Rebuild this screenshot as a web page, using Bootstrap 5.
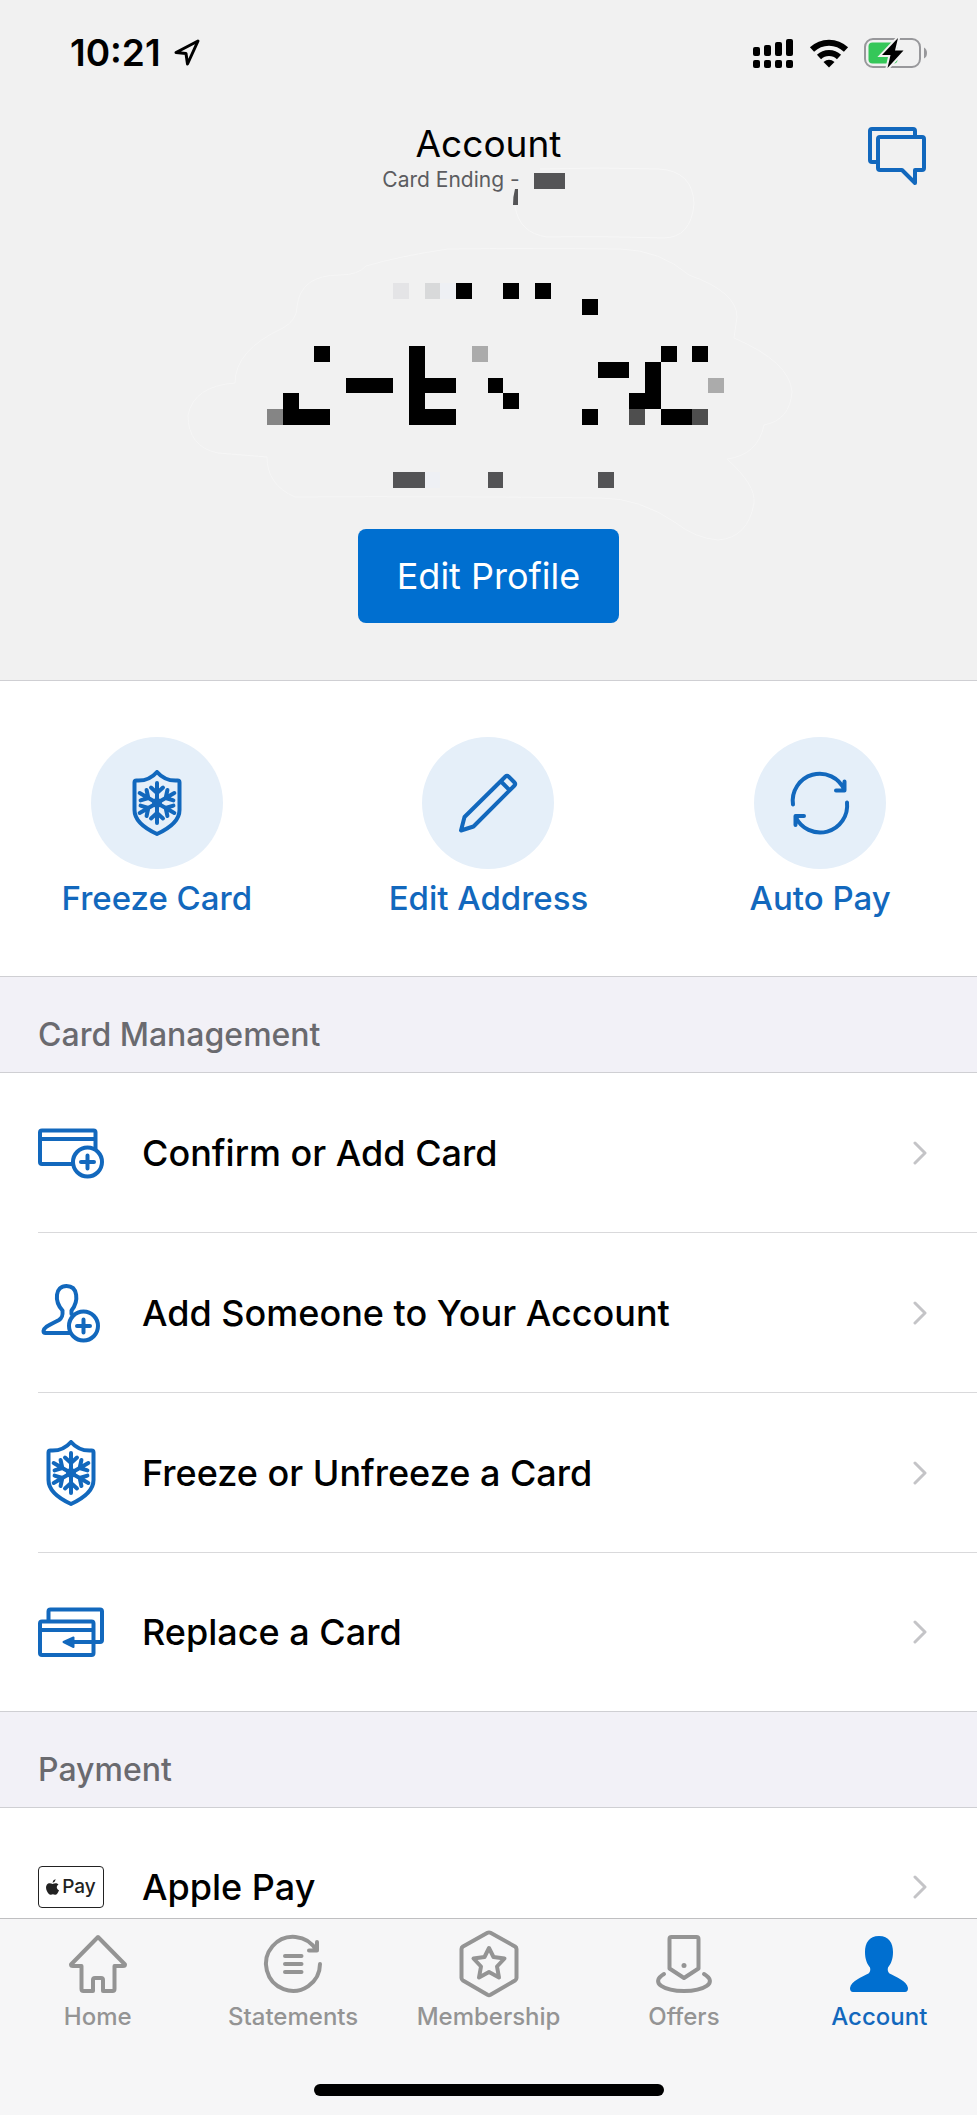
<!DOCTYPE html>
<html lang="en">
<head>
<meta charset="utf-8">
<meta name="viewport" content="width=device-width, initial-scale=1">
<title>Account</title>
<link rel="stylesheet" href="https://cdn.jsdelivr.net/npm/bootstrap@5.3.0/dist/css/bootstrap.min.css">
<style>
  :root { --blue: #1268bd; --blue-fill: #006fd0; --line: #cfcfd3; }
  body { font-family: Inter, "Liberation Sans", sans-serif; color: #000; background: #fff; }
  svg { display: block; flex: none; overflow: visible; }
  .ico { fill: none; stroke: currentColor; stroke-width: 4; stroke-linecap: round; stroke-linejoin: round; }

  .profile { background: #f1f1f1; border-bottom: 1px solid var(--line); padding-bottom: 57px; }
  .status { height: 106px; margin-bottom: 16px; padding: 0 50px 0 70px; }
  .clock { font-size: 37px; line-height: 44px; font-weight: 600; }
  .titlebar { display: grid; grid-template-columns: 1fr auto 1fr; padding: 0 51px; }
  .title { font-size: 37px; line-height: 44px; font-weight: 400; }
  .subtitle { font-size: 21px; line-height: 28px; color: #5b5c60; }
  .chat { color: var(--blue); margin-top: 5px; }
  .btn-profile { background: var(--blue-fill); color: #fff; font-size: 36px; line-height: 44px; padding: 25px 39px; border: 0; border-radius: 8px; }
  .btn-profile:hover { background: #0062b8; color: #fff; }

  .quick { padding: 56px 0 58px; border-bottom: 1px solid var(--line); }
  .quick .row { --bs-gutter-x: 18px; }
  .quick a { color: var(--blue); font-size: 33px; line-height: 40px; font-weight: 500; gap: 9px; }
  .disc { width: 132px; height: 132px; background: #e5eff9; }

  .section-title { font-size: 32px; line-height: 40px; font-weight: 500; color: #6a6a6f; background: #f2f1f7; padding: 38px 38px 17px; border-bottom: 1px solid var(--line); }
  .menu a { color: #000; margin-left: 38px; padding-right: 50px; height: 160px; border-bottom: 1px solid #d9d9db; gap: 38px; font-size: 36px; line-height: 44px; font-weight: 500; }
  .menu li:last-child { border-bottom: 1px solid var(--line); }
  .menu li:last-child a { height: 158px; border-bottom: 0; }
  .menu .ico { color: var(--blue); }
  .menu .chev { color: #c4c4c7; stroke-width: 3; }
  .pay-mark { width: 66px; height: 42px; border: 1px solid #222; border-radius: 4px; font-size: 19px; line-height: 24px; font-weight: 500; gap: 3px; color: #222; }

  .tabs { background: #f6f6f7; border-top: 1px solid #bfbfc1; padding: 11px 0 19px; }
  .tabs a { color: #949494; font-size: 24px; line-height: 28px; font-weight: 500; gap: 5px; flex: 1 1 0; }
  .tabs a.active { color: var(--blue); }
  .home-bar { width: 350px; height: 12px; background: #000; margin-top: 53px; }
</style>
</head>
<body>

<svg width="0" height="0" class="position-absolute" aria-hidden="true">
  <symbol id="shield" viewBox="0 0 66 66">
    <path d="M33 2C27 9 20 11 12.500 10.500Q10.500 10.500 10.500 12.500V40C10.500 51 20 58 33 64C46 58 55.500 51 55.500 40V12.500Q55.500 10.500 53.500 10.500C46 11 39 9 33 2Z"/>
    <path d="M33 33V13M27 17.500L33 23L39 17.500"/>
    <path d="M33 33V13M27 17.500L33 23L39 17.500" transform="rotate(60 33 33)"/>
    <path d="M33 33V13M27 17.500L33 23L39 17.500" transform="rotate(120 33 33)"/>
    <path d="M33 33V13M27 17.500L33 23L39 17.500" transform="rotate(180 33 33)"/>
    <path d="M33 33V13M27 17.500L33 23L39 17.500" transform="rotate(240 33 33)"/>
    <path d="M33 33V13M27 17.500L33 23L39 17.500" transform="rotate(300 33 33)"/>
    <circle cx="33" cy="33" r="3"/>
  </symbol>
  <symbol id="chevron" viewBox="0 0 14 24"><path d="M2 2L12 12L2 22"/></symbol>
</svg>

<header class="profile">
  <div class="status d-flex align-items-center justify-content-between">
    <div class="d-flex align-items-center gap-2">
      <span class="clock">10:21</span>
      <svg class="ms-1" width="28" height="28" viewBox="0 0 28 28" fill="none" stroke="#000" stroke-width="3" stroke-linejoin="round"><path d="M25 2L3 13.500L13 14.500L14.500 25Z"/></svg>
    </div>
    <div class="d-flex align-items-center">
      <svg class="me-3" width="41" height="30" viewBox="0 0 41 30"><g fill="#000"><rect y="9" width="7" height="9" rx="2"/><rect x="11" y="7" width="7" height="11" rx="2"/><rect x="22" y="4" width="7" height="14" rx="2"/><rect x="33" y="1" width="7" height="17" rx="2"/><rect y="22" width="7" height="8" rx="2"/><rect x="11" y="22" width="7" height="8" rx="2"/><rect x="22" y="22" width="7" height="8" rx="2"/><rect x="33" y="22" width="7" height="8" rx="2"/></g></svg>
      <svg class="me-3" width="38" height="29" viewBox="0 0 38 29"><g fill="none" stroke="#000" stroke-width="6"><path d="M2 10.500A24.500 24.500 0 0 1 36 10.500"/><path d="M9 18A14.500 14.500 0 0 1 29 18"/></g><path d="M19 28.500L13.500 23Q19 18.500 24.500 23Z"/></svg>
      <svg width="63" height="30" viewBox="0 0 63 30"><rect x="1" y="1" width="55" height="28" rx="8" fill="none" stroke="#98989b" stroke-width="2"/><rect x="4.500" y="4.500" width="29" height="21" rx="4" fill="#35c759"/><path d="M60 9.500Q63 11 63 15T60 20.500Z" fill="#98989b"/><path d="M34 0L18 17H26.500L23.500 30L39.500 12.500H31Z" fill="#000" stroke="#f1f1f1" stroke-width="4" paint-order="stroke"/></svg>
    </div>
  </div>

  <div class="titlebar">
    <span></span>
    <div class="text-center">
      <h1 class="title m-0">Account</h1>
      <div class="subtitle d-flex justify-content-center">
        <span>Card Ending -</span>
        <svg width="75" height="28" viewBox="521 166 75 28"><path d="M535 173h31v16h-31z M516 189h3v16h-5q0-9 2-16z" fill="#545456"/><path d="M541 169Q600 167 660 169Q694 171 695 204Q692 238 664 238Q600 236 548 237Q520 233 516 206" fill="none" stroke="#f7f7f7"/></svg>
      </div>
    </div>
    <a href="#" class="chat ms-auto" aria-label="Messages"><svg class="ico" width="58" height="58" viewBox="0 0 58 58"><path d="M10 35H4Q2 35 2 33V4Q2 2 4 2H45Q47 2 47 4V10M12 10H54Q56 10 56 12V41Q56 43 54 43H47V56L34 43H12Q10 43 10 41V12Q10 10 12 10Z"/></svg></a>
  </div>

  <!-- redacted name and membership details -->
  <svg class="mx-auto mw-100" width="621" height="335" viewBox="178 194 621 335" role="img" aria-label="Hidden member details">
    <path d="M448 249Q530 248 620 249Q660 250 689 275Q737 292 737 317L734 338Q790 362 792 392Q790 420 764 425Q758 455 727 459Q756 485 754 503Q748 538 718 540Q695 538 676 523Q640 498 601 498Q440 496 295 497Q267 485 267 457L218 453Q188 447 188 415Q194 386 235 383Q235 350 283 328Q297 320 297 307Q300 275 340 275Q358 275 366 266Q400 256 448 249Z" fill="none" stroke="#f6f6f6"/>
    <g transform="translate(267 283) scale(15.750)" shape-rendering="crispEdges">
      <path d="M12 0h1v1h-1zM15 0h1v1h-1zM17 0h1v1h-1zM20 1h1v1h-1zM3 4h1v1h-1zM9 4h1v2h2v1h-2v1h2v1h-3zM25 4h1v1h-1zM27 4h1v1h-1zM21 5h2v1h-2zM24 5h1v3h-2v-1h1zM5 6h3v1h-3zM14 6h1v1h-1zM15 7h1v1h-1zM1 7h1v1h2v1h-3zM20 8h1v1h-1zM25 8h2v1h-2z"/>
      <path fill="#e4e4e6" d="M8 0h1v1h-1z"/><path fill="#d8d9da" d="M10 0h1v1h-1z"/>
      <path fill="#ababab" d="M13 4h1v1h-1zM28 6h1v1h-1z"/><path fill="#858585" d="M0 8h1v1h-1z"/>
      <path fill="#4e4e4e" d="M23 8h1v1h-1zM27 8h1v1h-1z"/><path fill="#545456" d="M8 12h2v1h-2zM14 12h1v1h-1zM21 12h1v1h-1z"/>
      <path fill="#eef0f4" d="M10 12h1v1h-1zM11 0h1v1h-1z"/>
    </g>
  </svg>
  <div class="text-center"><button type="button" class="btn btn-profile d-block mx-auto">Edit Profile</button></div>
</header>

<main>
  <nav class="quick overflow-hidden" aria-label="Quick actions">
    <div class="row">
      <div class="col-4"><a href="#" class="d-flex flex-column align-items-center text-decoration-none">
        <span class="disc rounded-circle d-flex align-items-center justify-content-center"><svg class="ico" width="66" height="66"><use href="#shield"/></svg></span>Freeze Card</a></div>
      <div class="col-4"><a href="#" class="d-flex flex-column align-items-center text-decoration-none">
        <span class="disc rounded-circle d-flex align-items-center justify-content-center"><svg class="ico" width="66" height="66" viewBox="0 0 66 66"><path d="M6 60.500L9.500 47L50.500 6.500Q52 5 53.500 6.500L59.500 12.500Q61 14 59.500 15.500L18.500 56.500ZM46 11.500L54.500 20"/></svg></span>Edit Address</a></div>
      <div class="col-4"><a href="#" class="d-flex flex-column align-items-center text-decoration-none">
        <span class="disc rounded-circle d-flex align-items-center justify-content-center"><svg class="ico" width="66" height="66" viewBox="0 0 66 66"><path d="M6 34.500A27 27 0 0 1 57.500 20M57.500 11.500V20.500H49M60 32.500A27 27 0 0 1 8.500 46.500M8.500 55V46H17"/></svg></span>Auto Pay</a></div>
    </div>
  </nav>

  <section>
    <h2 class="section-title m-0">Card Management</h2>
    <ul class="menu list-unstyled m-0">
      <li><a href="#" class="d-flex align-items-center text-decoration-none">
        <svg class="ico" width="66" height="66" viewBox="0 0 66 66"><rect x="2" y="10.500" width="55.500" height="33.500" rx="2"/><path d="M2 19H57"/><circle cx="49.500" cy="42" r="14.500" fill="#fff"/><path d="M49.500 35.500V48.500M43 42H56"/></svg>
        <span class="flex-grow-1">Confirm or Add Card</span><svg class="ico chev" width="14" height="24"><use href="#chevron"/></svg></a></li>
      <li><a href="#" class="d-flex align-items-center text-decoration-none">
        <svg class="ico" width="66" height="66" viewBox="0 0 66 66"><path d="M24.500 30.500C16 21 17 6 28.500 6S41 21 33.500 30.500M24.500 30.500C25 36 24 38 21 40C14 44 6 46 5.500 51Q5.500 53 7.500 53H32M33.500 30.500V34"/><circle cx="45.500" cy="46" r="14.500" fill="#fff"/><path d="M45.500 39.500V52.500M39 46H52"/></svg>
        <span class="flex-grow-1">Add Someone to Your Account</span><svg class="ico chev" width="14" height="24"><use href="#chevron"/></svg></a></li>
      <li><a href="#" class="d-flex align-items-center text-decoration-none">
        <svg class="ico" width="66" height="66"><use href="#shield"/></svg>
        <span class="flex-grow-1">Freeze or Unfreeze a Card</span><svg class="ico chev" width="14" height="24"><use href="#chevron"/></svg></a></li>
      <li><a href="#" class="d-flex align-items-center text-decoration-none">
        <svg class="ico" width="66" height="66" viewBox="0 0 66 66"><path d="M10.500 22V12.500Q10.500 10.500 12.500 10.500H62Q64 10.500 64 12.500V41Q64 43 62 43H34"/><rect x="2" y="22.500" width="53.500" height="33.500" rx="2"/><path d="M2 31H55"/><path d="M25.500 43L35.500 38.500V48Z" fill="currentColor" stroke-width="2"/></svg>
        <span class="flex-grow-1">Replace a Card</span><svg class="ico chev" width="14" height="24"><use href="#chevron"/></svg></a></li>
    </ul>
  </section>

  <section>
    <h2 class="section-title m-0">Payment</h2>
    <ul class="menu list-unstyled m-0">
      <li><a href="#" class="d-flex align-items-center text-decoration-none">
        <span class="pay-mark flex-shrink-0 d-flex align-items-center justify-content-center"><svg width="13" height="16" viewBox="0 0 13 16" fill="#222"><path d="M9.500 0Q9.500 3 6.500 3.800Q6.600 1 9.500 0ZM12.500 5.500C10 7 10.400 10 13 11.200C12 14 10.600 16 9 15.700Q6.800 14.800 5 15.700C2.800 16.600-1.800 9.500.8 5.800C2.600 3.300 5 4.400 6.600 4.900C8.200 4.400 10.500 3.300 12.500 5.500Z"/></svg>Pay</span>
        <span class="flex-grow-1">Apple Pay</span><svg class="ico chev" width="14" height="24"><use href="#chevron"/></svg></a></li>
    </ul>
  </section>
</main>

<nav class="tabs fixed-bottom" aria-label="Main">
  <div class="d-flex">
    <a href="#" class="d-flex flex-column align-items-center text-decoration-none"><svg class="ico" width="68" height="68" viewBox="0 0 68 68"><path d="M34 7L7 34.500Q7 36 9 36H17.500V59Q17.500 61 19.500 61H29V50Q29 48 31 48H37Q39 48 39 50V61H48.500Q50.500 61 50.500 59V36H59Q61 36 61 34.500Z"/></svg>Home</a>
    <a href="#" class="d-flex flex-column align-items-center text-decoration-none"><svg class="ico" width="68" height="68" viewBox="0 0 68 68"><path d="M61 34A27 27 0 1 1 57.500 20.500M58 12V20.500H50M26 26H42.500M26 34H42.500M26 42H42.500"/></svg>Statements</a>
    <a href="#" class="d-flex flex-column align-items-center text-decoration-none"><svg class="ico" width="68" height="68" viewBox="0 0 68 68"><path d="M32.500 2.800Q34 2 35.500 2.800L60 16.500Q61.500 17.500 61.500 19V48Q61.500 49.500 60 50.500L35.500 64.800Q34 65.500 32.500 64.800L8 50.500Q6.500 49.500 6.500 48V19Q6.500 17.500 8 16.500Z"/><path d="M34 18L38.500 27L49.500 28.500L42 36.500L44 47.500L34 42L24 47.500L26 36.500L18.500 28.500L29.500 27Z"/></svg>Membership</a>
    <a href="#" class="d-flex flex-column align-items-center text-decoration-none"><svg class="ico" width="68" height="68" viewBox="0 0 68 68"><path d="M21.500 7H46.500Q48.500 7 48.500 9V38.500L34 48L19.500 38.500V9Q19.500 7 21.500 7ZM14 44C-1 53 15 61 34 61S69 53 54 44"/><circle cx="34" cy="35.500" r="2.500" fill="currentColor" stroke="none"/></svg>Offers</a>
    <a href="#" class="active d-flex flex-column align-items-center text-decoration-none" aria-current="page"><svg width="68" height="68" viewBox="0 0 68 68" fill="#006fd0"><path d="M34 6C44 6 48 13 48 22C48 29 46 34 43 37.500Q42 41 44.500 43.500C51 47 62 51 63 58Q63 62 60 62H8Q5 62 5 58C6 51 17 47 23.500 43.500Q26 41 25 37.500C22 34 20 29 20 22C20 13 24 6 34 6Z"/></svg>Account</a>
  </div>
  <div class="home-bar rounded-pill mx-auto"></div>
</nav>

<script src="https://cdn.jsdelivr.net/npm/bootstrap@5.3.0/dist/js/bootstrap.bundle.min.js"></script>
</body>
</html>
